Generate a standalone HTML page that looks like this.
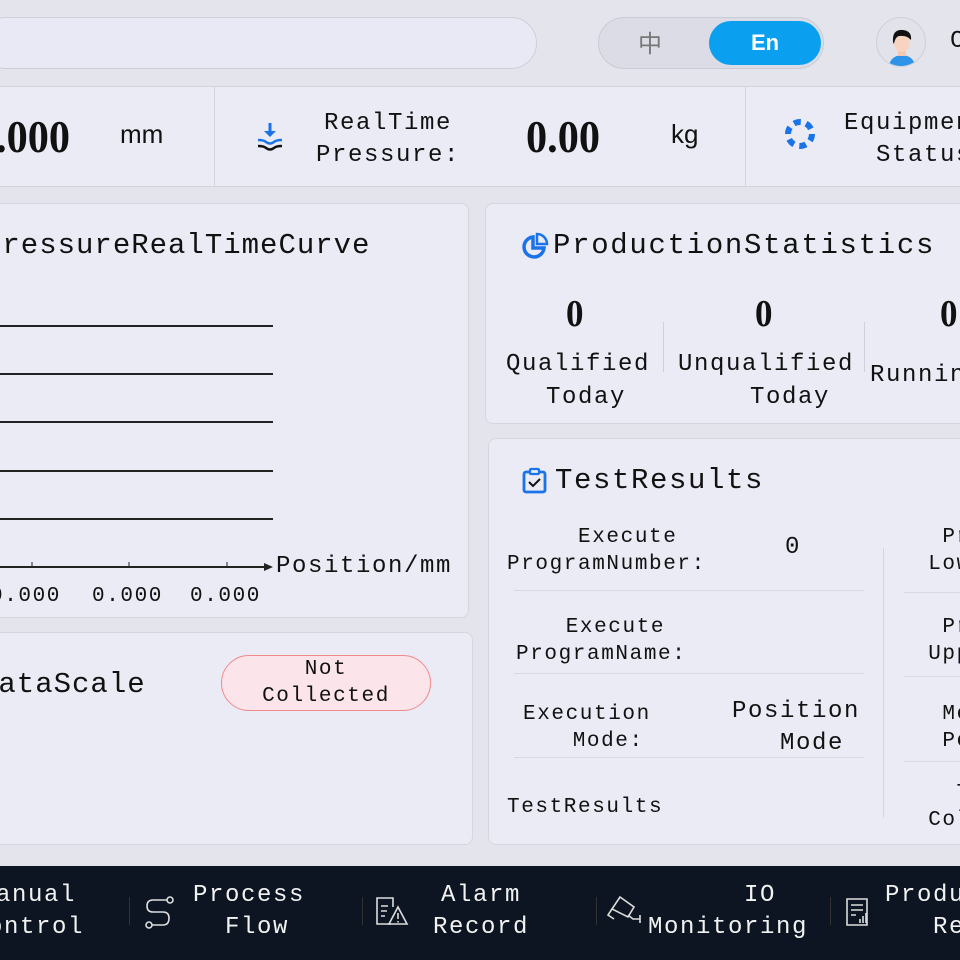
<!DOCTYPE html>
<html><head><meta charset="utf-8"><style>
*{margin:0;padding:0;box-sizing:border-box}
body{width:960px;height:960px;overflow:hidden;background:#e4e4ec;position:relative;font-family:"Liberation Mono","IPAGothic",monospace;color:#111}
.a{position:absolute}
.t{position:absolute;white-space:pre;text-align:center;font-size:21px;letter-spacing:1.6px;line-height:27px}
.p{position:absolute;background:#ebebf6;border:1px solid #d6d6e0;border-radius:8px}
.h{position:absolute;white-space:pre;font-size:29px;letter-spacing:1px;line-height:34px}
.n{position:absolute;font-family:"Liberation Serif",serif;font-weight:bold;white-space:pre;transform:scaleX(0.92);transform-origin:left top}
.ln{position:absolute;height:1px;background:#d8d8e2}
.nav{position:absolute;color:#f2f2f2;font-size:24px;letter-spacing:1.6px;line-height:32px;white-space:pre;text-align:center}
.u{position:absolute;font-family:"Liberation Sans",sans-serif;font-size:26px;white-space:pre}
</style></head><body>
<!-- top bar -->
<div class="a" style="left:-20px;top:17px;width:557px;height:52px;border-radius:26px;background:#e9e9f5;border:1px solid #cfcfda"></div>
<div class="a" style="left:598px;top:17px;width:226px;height:52px;border-radius:26px;background:#dcdce6;border:1px solid #cbcbd5"></div>
<div class="t" style="left:638px;top:28px;font-size:24px;color:#777;font-family:'Noto Sans CJK SC',sans-serif">中</div>
<div class="a" style="left:709px;top:21px;width:112px;height:44px;border-radius:22px;background:#0aa0ef"></div>
<div class="t" style="left:709px;top:29px;width:112px;font-family:'Liberation Sans',sans-serif;font-weight:bold;color:#fff;font-size:22px;letter-spacing:0">En</div>
<div class="a" style="left:876px;top:17px;width:50px;height:50px;border-radius:25px;background:#e2e2ea;border:1px solid #cfcfd8;overflow:hidden">
<svg width="50" height="50" viewBox="0 0 50 50"><path d="M12 50 Q12 38 25 37 Q38 38 38 50Z" fill="#2f93e8"/><rect x="21" y="30" width="8" height="8" fill="#f4c7b0"/><ellipse cx="25" cy="24" rx="8" ry="10" fill="#f8d3c0"/><path d="M16 24 Q15 11 26 12 Q35 13 34 22 Q30 17 22 18 Q18 19 17 26Z" fill="#111"/></svg></div>
<div class="t" style="left:950px;top:28px;font-size:24px">C</div>
<!-- stats bar -->
<div class="a" style="left:-10px;top:86px;width:980px;height:101px;background:#ebebf6;border-top:1px solid #d4d4de;border-bottom:1px solid #d4d4de"></div>
<div class="a" style="left:214px;top:87px;width:1px;height:99px;background:#d4d4de"></div>
<div class="a" style="left:745px;top:87px;width:1px;height:99px;background:#d4d4de"></div>
<div class="n" style="left:-4px;top:110px;font-size:46px">.000</div>
<div class="u" style="left:120px;top:119px">mm</div>
<svg class="a" style="left:254px;top:121px" width="32" height="32" viewBox="0 0 32 32"><path d="M16 2 V14" stroke="#1a73e8" stroke-width="3"/><path d="M10 10 L16 16 L22 10Z" fill="#1a73e8"/><path d="M4 19 Q10 19 12 21 Q16 24 20 21 Q22 19 28 19" stroke="#1a73e8" stroke-width="2.5" fill="none"/><path d="M4 25 Q10 25 12 27 Q16 30 20 27 Q22 25 28 25" stroke="#111" stroke-width="2.5" fill="none"/></svg>
<div class="t" style="left:316px;top:108px;font-size:24px;line-height:32px">RealTime
Pressure:</div>
<div class="n" style="left:526px;top:110px;font-size:46px">0.00</div>
<div class="u" style="left:671px;top:119px">kg</div>
<svg class="a" style="left:783px;top:117px" width="34" height="34" viewBox="0 0 34 34"><circle cx="17" cy="17" r="12" fill="none" stroke="#1a73e8" stroke-width="6" stroke-dasharray="7 5.5"/></svg>
<div class="t" style="left:844px;top:108px;font-size:24px;line-height:32px">Equipment
 Status</div>
<!-- chart panel -->
<div class="p" style="left:-10px;top:203px;width:479px;height:415px"></div>
<div class="h" style="left:-16px;top:229px">PressureRealTimeCurve</div>
<div class="a" style="left:0;top:325px;width:273px;height:2px;background:#222"></div>
<div class="a" style="left:0;top:373px;width:273px;height:2px;background:#222"></div>
<div class="a" style="left:0;top:421px;width:273px;height:2px;background:#222"></div>
<div class="a" style="left:0;top:470px;width:273px;height:2px;background:#222"></div>
<div class="a" style="left:0;top:518px;width:273px;height:2px;background:#222"></div>
<div class="a" style="left:0;top:566px;width:266px;height:2px;background:#222"></div>
<svg class="a" style="left:0;top:560px" width="276" height="16"><path d="M32 7 V2 M129 7 V2 M227 7 V2" stroke="#222"/><path d="M264 3 L273 7 L264 11Z" fill="#222"/></svg>
<div class="t" style="left:276px;top:551px;font-size:24px;letter-spacing:1.6px;line-height:32px">Position/mm</div>
<div class="t" style="left:-10px;top:583px;font-size:21px">0.000</div>
<div class="t" style="left:92px;top:583px;font-size:21px">0.000</div>
<div class="t" style="left:190px;top:583px;font-size:21px">0.000</div>
<!-- data scale panel -->
<div class="p" style="left:-10px;top:632px;width:483px;height:213px"></div>
<div class="h" style="left:-20px;top:668px">DataScale</div>
<div class="a" style="left:221px;top:655px;width:210px;height:56px;border-radius:28px;background:#fbe4ea;border:1px solid #f08a8a"></div>
<div class="t" style="left:221px;top:656px;width:210px;font-size:21px">Not
Collected</div>
<!-- production stats -->
<div class="p" style="left:485px;top:203px;width:490px;height:221px"></div>
<svg class="a" style="left:521px;top:232px" width="28" height="28" viewBox="0 0 28 28"><path d="M12 5 A10 10 0 1 0 23 16 H12Z" fill="none" stroke="#1a73e8" stroke-width="3.5"/><path d="M16 2 A10 10 0 0 1 26 12 H16Z" fill="none" stroke="#1a73e8" stroke-width="2.5"/></svg>
<div class="h" style="left:553px;top:229px;letter-spacing:1.7px">ProductionStatistics</div>
<div class="n" style="left:566px;top:292px;font-size:38px">0</div>
<div class="n" style="left:755px;top:292px;font-size:38px">0</div>
<div class="n" style="left:940px;top:292px;font-size:38px">0</div>
<div class="a" style="left:663px;top:322px;width:1px;height:50px;background:#d0d0da"></div>
<div class="a" style="left:864px;top:322px;width:1px;height:50px;background:#d0d0da"></div>
<div class="t" style="left:506px;top:348px;font-size:24px;line-height:33px">Qualified
 Today</div>
<div class="t" style="left:678px;top:348px;font-size:24px;line-height:33px">Unqualified
   Today</div>
<div class="t" style="left:870px;top:362px;font-size:24px">Running</div>
<!-- test results -->
<div class="p" style="left:488px;top:438px;width:490px;height:407px"></div>
<svg class="a" style="left:521px;top:467px" width="28" height="28" viewBox="0 0 28 28"><rect x="3" y="5" width="21" height="20" rx="2" fill="none" stroke="#1a73e8" stroke-width="2.8"/><rect x="9" y="2" width="9" height="5" rx="1" fill="#ebebf6" stroke="#1a73e8" stroke-width="2.2"/><path d="M8 15 L12 19 L19 12" fill="none" stroke="#111" stroke-width="2"/></svg>
<div class="h" style="left:555px;top:464px;letter-spacing:1.6px">TestResults</div>
<div class="t" style="left:507px;top:524px">   Execute
ProgramNumber:</div>
<div class="t" style="left:785px;top:534px;font-size:24px">0</div>
<div class="ln" style="left:514px;top:590px;width:350px"></div>
<div class="t" style="left:516px;top:614px">  Execute
ProgramName:</div>
<div class="ln" style="left:514px;top:673px;width:350px"></div>
<div class="t" style="left:523px;top:701px">Execution
   Mode:</div>
<div class="t" style="left:732px;top:696px;font-size:24px;line-height:32px">Position
  Mode</div>
<div class="ln" style="left:514px;top:757px;width:350px"></div>
<div class="t" style="left:507px;top:794px">TestResults</div>
<div class="a" style="left:883px;top:548px;width:1px;height:270px;background:#d6d6e0"></div>
<div class="t" style="left:914px;top:524px;text-align:left">  Pr
 Lower</div>
<div class="ln" style="left:904px;top:592px;width:60px"></div>
<div class="t" style="left:914px;top:614px;text-align:left">  Pr
 Upper</div>
<div class="ln" style="left:904px;top:676px;width:60px"></div>
<div class="t" style="left:914px;top:701px;text-align:left">  Me
  Po</div>
<div class="ln" style="left:904px;top:761px;width:60px"></div>
<div class="t" style="left:914px;top:780px;text-align:left">   T
 Col</div>
<!-- bottom nav -->
<div class="a" style="left:0;top:866px;width:960px;height:94px;background:#0c1521"></div>
<div class="nav" style="left:-28px;top:880px">Manual
Control</div>
<div class="a" style="left:129px;top:897px;width:1px;height:28px;background:#333"></div>
<svg class="a" style="left:143px;top:895px" width="32" height="36" viewBox="0 0 32 36"><g fill="none" stroke="#ddd" stroke-width="1.6"><circle cx="27" cy="5" r="3"/><circle cx="6" cy="30" r="3"/><path d="M24 5 H10 Q4 5 4 11 Q4 17 10 17 H20 Q26 17 26 23 Q26 30 20 30 H9"/></g></svg>
<div class="nav" style="left:193px;top:880px">Process
 Flow</div>
<div class="a" style="left:362px;top:897px;width:1px;height:28px;background:#333"></div>
<svg class="a" style="left:375px;top:895px" width="34" height="32" viewBox="0 0 34 32"><g fill="none" stroke="#ddd" stroke-width="1.6"><path d="M16 29 H2 V3 H18 V12"/><path d="M6 11 H13 M6 16 H12 M6 21 H10"/><path d="M23 12 L32 29 H14Z"/><path d="M23 18 V24 M23 26 V27.5"/></g></svg>
<div class="nav" style="left:433px;top:880px">Alarm
Record</div>
<div class="a" style="left:596px;top:897px;width:1px;height:28px;background:#333"></div>
<svg class="a" style="left:606px;top:893px" width="42" height="34" viewBox="0 0 42 34"><g fill="none" stroke="#ddd" stroke-width="1.6"><path d="M14 4 L28 14 L22 24 L6 16Z"/><path d="M22 22 L27 26 H34 M34 22 V30"/><path d="M6 16 L2 22 L8 26"/></g></svg>
<div class="nav" style="left:648px;top:880px">    IO
Monitoring</div>
<div class="a" style="left:830px;top:897px;width:1px;height:28px;background:#333"></div>
<svg class="a" style="left:845px;top:897px" width="26" height="30" viewBox="0 0 26 30"><g fill="none" stroke="#ddd" stroke-width="1.6"><path d="M2 2 H22 V28 H2Z"/><path d="M6 8 H18 M6 13 H18 M6 18 H11 M15 26 V22 M18 26 V19 M21 26 V16"/></g></svg>
<div class="nav" style="left:885px;top:880px">Production
  Record</div>
</body></html>
